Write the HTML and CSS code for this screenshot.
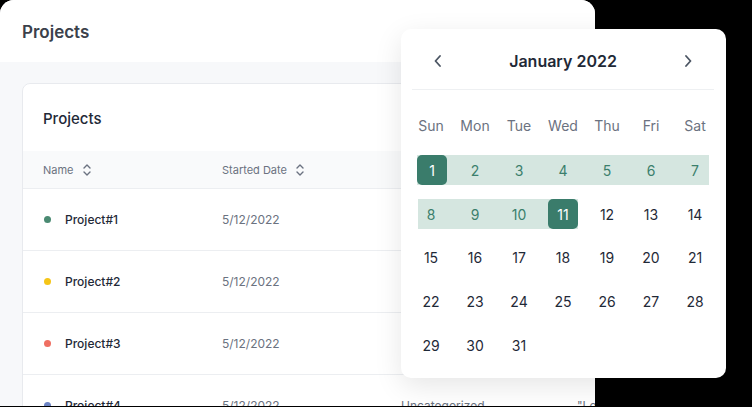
FILE: index.html
```html
<!DOCTYPE html>
<html>
<head>
<meta charset="utf-8">
<link rel="stylesheet" href="styles.css">
</head>
<body>
<div class="stage">
  <div class="window">
    <div class="win-header">Projects</div>
    <div class="win-body">
      <div class="card">
        <div class="card-title">Projects</div>
        <div class="thead">
          <div class="th">Name <svg class="sort" viewBox="0 0 10 14" width="10" height="14"><polyline points="2,5 5,2 8,5"/><polyline points="2,9 5,12 8,9"/></svg></div>
          <div class="th">Started Date <svg class="sort" viewBox="0 0 10 14" width="10" height="14"><polyline points="2,5 5,2 8,5"/><polyline points="2,9 5,12 8,9"/></svg></div>
          <div class="th">Category <svg class="sort" viewBox="0 0 10 14" width="10" height="14"><polyline points="2,5 5,2 8,5"/><polyline points="2,9 5,12 8,9"/></svg></div>
          <div class="th">Description</div>
        </div>
        <div class="tr">
          <div class="td name"><span class="dot green"></span>Project#1</div>
          <div class="td date">5/12/2022</div>
          <div class="td muted">Uncategorized</div>
          <div class="td muted">"Lorem</div>
        </div>
        <div class="tr">
          <div class="td name"><span class="dot yellow"></span>Project#2</div>
          <div class="td date">5/12/2022</div>
          <div class="td muted">Uncategorized</div>
          <div class="td muted">"Lorem</div>
        </div>
        <div class="tr">
          <div class="td name"><span class="dot red"></span>Project#3</div>
          <div class="td date">5/12/2022</div>
          <div class="td muted">Uncategorized</div>
          <div class="td muted">"Lorem</div>
        </div>
        <div class="tr">
          <div class="td name"><span class="dot blue"></span>Project#4</div>
          <div class="td date">5/12/2022</div>
          <div class="td muted">Uncategorized</div>
          <div class="td muted">"Lorem</div>
        </div>
      </div>
    </div>
  </div>

  <div class="calendar">
    <div class="cal-head">
      <svg class="chev" viewBox="0 0 8 12" width="8" height="12"><polyline points="6,1 1.5,6 6,11"/></svg>
      <div class="cal-title">January 2022</div>
      <svg class="chev" viewBox="0 0 8 12" width="8" height="12"><polyline points="2,1 6.5,6 2,11"/></svg>
    </div>
    <div class="cal-divider"></div>
    <div class="cal-grid">
      <div class="dn">Sun</div><div class="dn">Mon</div><div class="dn">Tue</div><div class="dn">Wed</div><div class="dn">Thu</div><div class="dn">Fri</div><div class="dn">Sat</div>

      <div class="d start"><span class="sel">1</span></div>
      <div class="d in">2</div><div class="d in">3</div><div class="d in">4</div><div class="d in">5</div><div class="d in">6</div>
      <div class="d in edge-r">7</div>

      <div class="d in edge-l">8</div>
      <div class="d in">9</div><div class="d in">10</div>
      <div class="d end"><span class="sel">11</span></div>
      <div class="d">12</div><div class="d">13</div><div class="d">14</div>

      <div class="d">15</div><div class="d">16</div><div class="d">17</div><div class="d">18</div><div class="d">19</div><div class="d">20</div><div class="d">21</div>
      <div class="d">22</div><div class="d">23</div><div class="d">24</div><div class="d">25</div><div class="d">26</div><div class="d">27</div><div class="d">28</div>
      <div class="d">29</div><div class="d">30</div><div class="d">31</div>
    </div>
  </div>
</div>
</body>
</html>
```

FILE: styles.css
```css
* { box-sizing: border-box; }
html, body { margin: 0; padding: 0; }
body {
  background: #000;
  font-family: Inter, "Noto Sans", "Liberation Sans", sans-serif;
  width: 752px;
  height: 407px;
  overflow: hidden;
}
.stage {
  position: relative;
  width: 752px;
  height: 407px;
}
.window {
  width: 595px;
  height: 406px;
  background: #f7f8fa;
  border-radius: 14px 14px 0 0;
  overflow: hidden;
  display: flex;
  flex-direction: column;
}
.win-header {
  height: 62px;
  flex: none;
  background: #fff;
  display: flex;
  align-items: center;
  padding: 2px 0 0 22px;
  font-size: 17px;
  font-weight: 600;
  color: #3b414b;
}
.win-body {
  padding: 21px 0 0 22px;
}
.card {
  width: 640px;
  background: #fff;
  border: 1px solid #e8eaee;
  border-radius: 8px;
}
.card-title {
  height: 67px;
  display: flex;
  align-items: center;
  padding: 2px 0 0 20px;
  font-size: 15px;
  font-weight: 500;
  color: #1f2937;
}
.thead, .tr {
  display: grid;
  grid-template-columns: 179px 179px 176px 1fr;
  padding-left: 20px;
  align-items: center;
}
.thead {
  height: 38px;
  background: #f9fafb;
  border-bottom: 1px solid #eceef1;
}
.th {
  font-size: 11px;
  color: #6b7280;
  display: flex;
  align-items: center;
  gap: 8px;
}
.sort {
  fill: none;
  stroke: #6b7280;
  stroke-width: 1.4;
  stroke-linecap: round;
  stroke-linejoin: round;
}
.tr {
  height: 62px;
  border-bottom: 1px solid #eceef1;
}
.td {
  font-size: 12px;
  white-space: nowrap;
}
.name {
  display: flex;
  align-items: center;
  color: #1f2937;
  font-weight: 500;
}
.date, .muted {
  color: #6b7280;
}
.dot {
  width: 7px;
  height: 7px;
  border-radius: 50%;
  margin: 0 14px 0 1px;
}
.green { background: #4a8a72; }
.yellow { background: #f5c518; }
.red { background: #ef6f62; }
.blue { background: #6d84c4; }

.calendar {
  position: absolute;
  left: 401px;
  top: 29px;
  width: 325px;
  height: 349px;
  background: #fff;
  border-radius: 10px;
  box-shadow: 0 8px 28px rgba(0, 0, 0, 0.10);
}
.cal-head {
  height: 60px;
  display: flex;
  align-items: center;
  justify-content: space-between;
  padding: 3px 34px 0 33px;
}
.chev {
  fill: none;
  stroke: #4b5563;
  stroke-width: 1.8;
  stroke-linecap: round;
  stroke-linejoin: round;
}
.cal-title {
  font-size: 16px;
  font-weight: 600;
  color: #1f2937;
}
.cal-divider {
  height: 1px;
  margin: 0 12px 0 11px;
  background: #eef0f2;
}
.cal-grid {
  display: grid;
  grid-template-columns: repeat(7, 44px);
  grid-auto-rows: 30px;
  row-gap: 13.75px;
  padding: 21px 0 0 8px;
}
.dn {
  font-size: 14px;
  color: #6b7280;
  display: flex;
  align-items: center;
  justify-content: center;
  margin-bottom: 2px;
}
.d {
  font-size: 14px;
  color: #1f2937;
  display: flex;
  align-items: center;
  justify-content: center;
  padding-top: 1px;
}
.in {
  background: #d5e6e0;
  color: #3b7f6c;
}
.edge-l {
  background: linear-gradient(to right, transparent 9px, #d5e6e0 9px);
}
.edge-r {
  background: linear-gradient(to right, #d5e6e0 36px, transparent 36px);
}
.start {
  background: linear-gradient(to right, transparent 8px, #d5e6e0 8px);
  padding-top: 0;
}
.end {
  background: linear-gradient(to right, #d5e6e0 37px, transparent 37px);
  padding-top: 0;
}
.sel {
  width: 30px;
  height: 30px;
  border-radius: 5px;
  background: #3a7c6b;
  color: #fff;
  display: flex;
  align-items: center;
  justify-content: center;
  padding-top: 1px;
}
.start .sel { margin-left: 2px; }
```
